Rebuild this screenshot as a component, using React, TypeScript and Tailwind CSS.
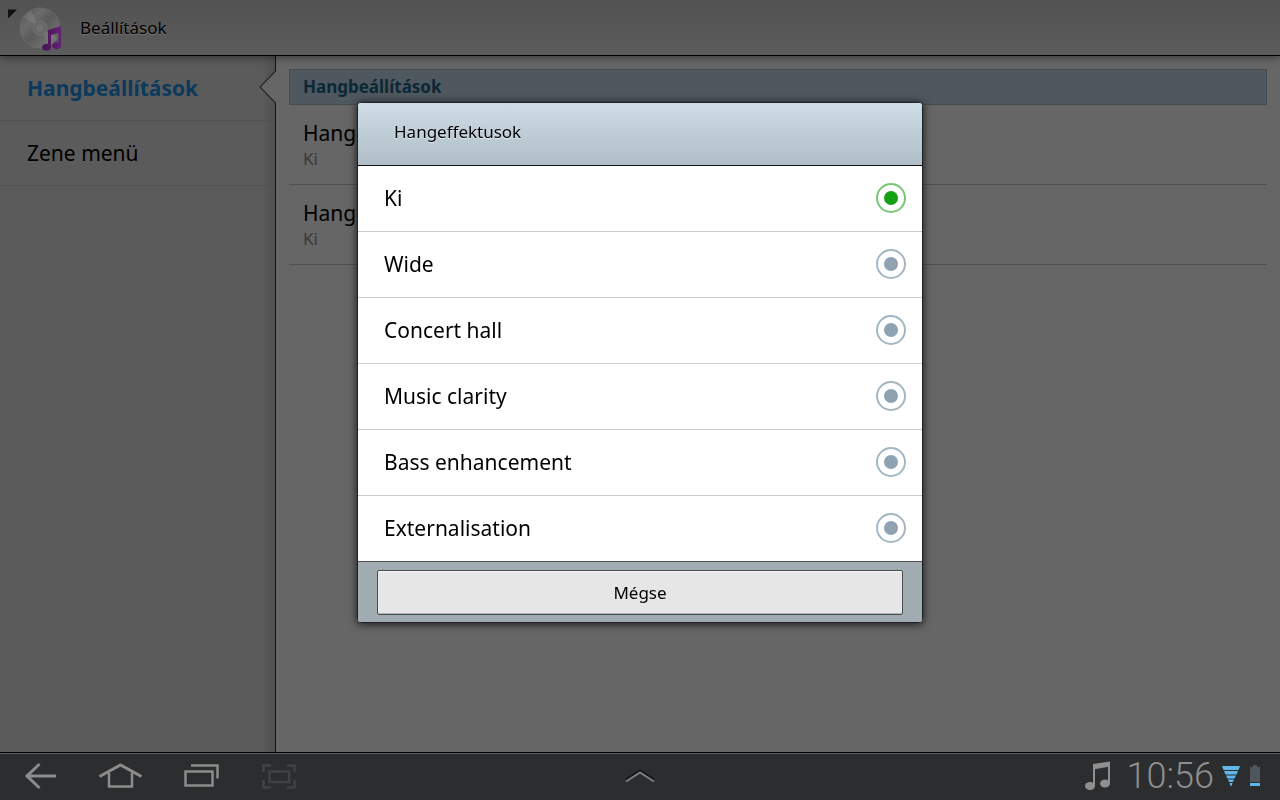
import { useState } from 'react'
import type { ReactNode } from 'react'

type Setting = {
  title: string
  value: string
}

const menuItems = ['Hangbeállítások', 'Zene menü']

const settings: Setting[] = [
  { title: 'Hangs', value: 'Ki' },
  { title: 'Hange', value: 'Ki' },
]

const effects = ['Ki', 'Wide', 'Concert hall', 'Music clarity', 'Bass enhancement', 'Externalisation']

export default function App() {
  return (
    <div className="flex min-h-screen flex-col bg-[#666666] font-['Noto_Sans','Open_Sans',sans-serif] text-black">
      <ActionBar />
      <div className="flex grow">
        <Sidebar />
        <SettingsList />
      </div>
      <SystemBar />
      <EffectDialog />
    </div>
  )
}

function ActionBar() {
  return (
    <header className="relative z-10 flex h-14 items-center border-b border-black bg-linear-to-b from-[#525252] to-[#5c5c5c] shadow-[0_1px_8px_rgba(0,0,0,0.5)]">
      <button type="button" aria-label="Vissza" className="ml-2 flex w-[72px]">
        <MusicLogo />
      </button>
      <h1 className="text-[17px] [text-shadow:0_1px_1px_#777]">Beállítások</h1>
    </header>
  )
}

function Sidebar() {
  const [selected, setSelected] = useState(menuItems[0])

  return (
    <nav className="w-[276px] shrink-0 border-r border-[#111] bg-[#5b5b5b] bg-linear-to-r from-[#5b5b5b] from-95% to-[#515151]">
      {menuItems.map((item) => (
        <div key={item} className="relative border-b border-[#525252]">
          <button
            type="button"
            onClick={() => setSelected(item)}
            className={
              item === selected
                ? 'block h-16 w-full px-[27px] pt-0.5 text-left text-[21px] font-bold text-[#0b3a5c]'
                : 'block h-16 w-full px-[27px] pt-0.5 text-left text-[21px]'
            }
          >
            {item}
          </button>
          {item === selected && (
            <svg viewBox="0 0 17 34" className="absolute top-3.5 -right-px h-[34px] w-[17px]">
              <path d="M17 1 L1 17 L17 33 Z" fill="#666666" />
              <path d="M16.5 1 L1 17 L16.5 33" fill="none" stroke="#2a2a2a" strokeWidth="1.2" />
            </svg>
          )}
        </div>
      ))}
    </nav>
  )
}

function SettingsList() {
  return (
    <main className="grow p-[13px]">
      <h2 className="flex h-9 items-center border border-[#424c51] bg-[#4e585e] px-[13px] text-[17px] font-bold text-[#0c2735]">
        Hangbeállítások
      </h2>
      <ul>
        {settings.map((setting) => (
          <li key={setting.title} className="flex h-20 flex-col justify-center border-b border-[#505050] px-3.5">
            <p className="text-[21px] leading-7">{setting.title}</p>
            <p className="text-[17px] leading-6 text-[#383838]">{setting.value}</p>
          </li>
        ))}
      </ul>
    </main>
  )
}

function EffectDialog() {
  const [effect, setEffect] = useState(effects[0])

  return (
    <div className="fixed inset-0 z-20 flex items-center justify-center pb-[75px]">
      <section
        role="dialog"
        aria-labelledby="effect-title"
        className="w-[566px] overflow-hidden rounded-sm border border-[#1c2226] bg-white shadow-[0_1px_8px_rgba(0,0,0,0.8)]"
      >
        <h2
          id="effect-title"
          className="flex h-[63px] items-center border-b border-[#111] bg-linear-to-b from-[#cfdee6] to-[#aebdc6] px-9 pb-1 text-[17px] [text-shadow:0_1px_1px_#e8f0f4]"
        >
          Hangeffektusok
        </h2>
        {effects.map((name) => (
          <label
            key={name}
            className="flex h-[66px] items-center justify-between border-b border-[#cccccc] pr-4 pl-[26px] text-[21px] last-of-type:border-[#4b5154]"
          >
            {name}
            <input
              type="radio"
              name="effect"
              checked={name === effect}
              onChange={() => setEffect(name)}
              className="mb-0.5 size-[30px] appearance-none rounded-full border-2 border-[#a3b7c3] bg-[#8fa2b1] bg-clip-content p-1.5 checked:border-[#77c777] checked:bg-[#14a014]"
            />
          </label>
        ))}
        <div className="h-[60px] bg-[#a1acb2] px-[19px] pt-2">
          <button
            type="button"
            className="h-[45px] w-full rounded-xs border border-[#484d50] bg-[#e6e6e6] text-[17px] shadow-[inset_0_1px_0_#f6f6f6,inset_0_-1px_0_#b5b5b5]"
          >
            Mégse
          </button>
        </div>
      </section>
    </div>
  )
}

function SystemBar() {
  return (
    <footer className="relative z-30 flex h-12 items-center justify-between border-t border-black bg-[#2b2d2f] pb-0.5 shadow-[inset_0_1px_0_#5a5a5a]">
      <div className="flex flex-1">
        <NavButton label="Vissza">
          <path d="M56 25 H28 M39.500 13 L27 25 L39.500 37" fill="none" stroke="#8c8c8c" strokeWidth="3" />
        </NavButton>
        <NavButton label="Kezdőképernyő">
          <path d="M19.500 25.500 L40.500 14 L61.500 25.500" fill="none" stroke="#8c8c8c" strokeWidth="3" />
          <path d="M29 22 V35.500 H52 V22" fill="none" stroke="#8c8c8c" strokeWidth="2.500" />
        </NavButton>
        <NavButton label="Legutóbbi">
          <path d="M31 14.500 H57.500 V27.500" fill="none" stroke="#8c8c8c" strokeWidth="2.500" />
          <path d="M25.500 20.500 H52.500 V34.500 H25.500 Z" fill="none" stroke="#8c8c8c" strokeWidth="2.500" />
        </NavButton>
        <NavButton label="Képernyőkép">
          <path
            d="M23.500 21 V14.500 H31 M47 14.500 H54.500 V21 M54.500 29 V36.500 H47 M31 36.500 H23.500 V29 M29.500 20.500 H49 V31 H29.500 Z"
            fill="none"
            stroke="#414243"
            strokeWidth="2.500"
          />
        </NavButton>
      </div>
      <button type="button" aria-label="Alkalmazások">
        <svg viewBox="0 0 32 16" className="h-4 w-8">
          <path d="M2 12 L16 3 L30 12" fill="none" stroke="#111" strokeWidth="2.500" />
          <path d="M2 13.500 L16 4.500 L30 13.500" fill="none" stroke="#808080" strokeWidth="2" />
        </svg>
      </button>
      <div className="flex flex-1 items-center justify-end text-[#8f8f8f]">
        <svg viewBox="0 0 28 30" className="mr-3.5 h-[30px] w-7">
          <ellipse cx="5" cy="25" rx="5" ry="4" fill="currentColor" />
          <ellipse cx="20" cy="22.500" rx="5" ry="4" fill="currentColor" />
          <path d="M9 25 V4.500 L24 2.200 V22.500" fill="none" stroke="currentColor" strokeWidth="2" />
          <path d="M8 3 L25 0.500 V5.500 L8 8.500 Z" fill="currentColor" />
        </svg>
        <time className="mr-2 font-['Roboto',sans-serif] text-4xl font-light leading-10">10:56</time>
        <svg viewBox="0 0 18 20" className="mr-2.5 h-5 w-[18px]" fill="#5fb8e8">
          <path d="M0 0 H18 L16.500 4 H1.500 Z M2 5 H16 L14.500 8.500 H3.500 Z M4 9.500 H14 L12.500 12.500 H5.500 Z M6 13.500 H12 L11 16 H7 Z M7.500 17 H10.500 L9.500 20 H8.500 Z" />
        </svg>
        <svg viewBox="0 0 10 21" className="mr-5 h-[21px] w-2.5">
          <path d="M3 0 H7 V2 H10 V17 H0 V2 H3 Z" fill="#4c565b" />
          <path d="M0 18 H10 V21 H0 Z" fill="#5fb8e8" />
        </svg>
      </div>
    </footer>
  )
}

function NavButton({ label, children }: { label: string; children: ReactNode }) {
  return (
    <button type="button" aria-label={label} className="h-12 w-20">
      <svg viewBox="0 1 80 48" className="h-12 w-20">
        {children}
      </svg>
    </button>
  )
}

function MusicLogo() {
  return (
    <svg viewBox="0 0 56 46" className="h-[46px] w-14">
      <defs>
        <linearGradient id="disc" x1="0" y1="0" x2="1" y2="1">
          <stop offset="0" stopColor="#505050" />
          <stop offset="0.300" stopColor="#6c6c6c" />
          <stop offset="0.500" stopColor="#5a5a5a" />
          <stop offset="0.750" stopColor="#6e6e6e" />
          <stop offset="1" stopColor="#525252" />
        </linearGradient>
        <linearGradient id="note" x1="0" y1="0" x2="1" y2="0">
          <stop offset="0" stopColor="#47164f" />
          <stop offset="1" stopColor="#652077" />
        </linearGradient>
      </defs>
      <path d="M0 4.500 H9 L0 13.500 Z" fill="#111" />
      <circle cx="32" cy="23" r="20" fill="url(#disc)" stroke="#6a6a6a" />
      <path d="M32 23 L16 12 A20 20 0 0 1 23 6 Z M32 23 L41 41 A20 20 0 0 0 49 33 Z" fill="#808080" opacity="0.5" />
      <circle cx="32" cy="23" r="7" fill="#686868" stroke="#747474" />
      <circle cx="32" cy="23" r="3.500" fill="#727272" />
      <path
        d="M40 25 L53 21 V40 A4.500 3.500 0 1 1 50.500 37.500 V28 L43 30 V42 A4.500 3.500 0 1 1 40 39 Z"
        fill="url(#note)"
      />
    </svg>
  )
}
